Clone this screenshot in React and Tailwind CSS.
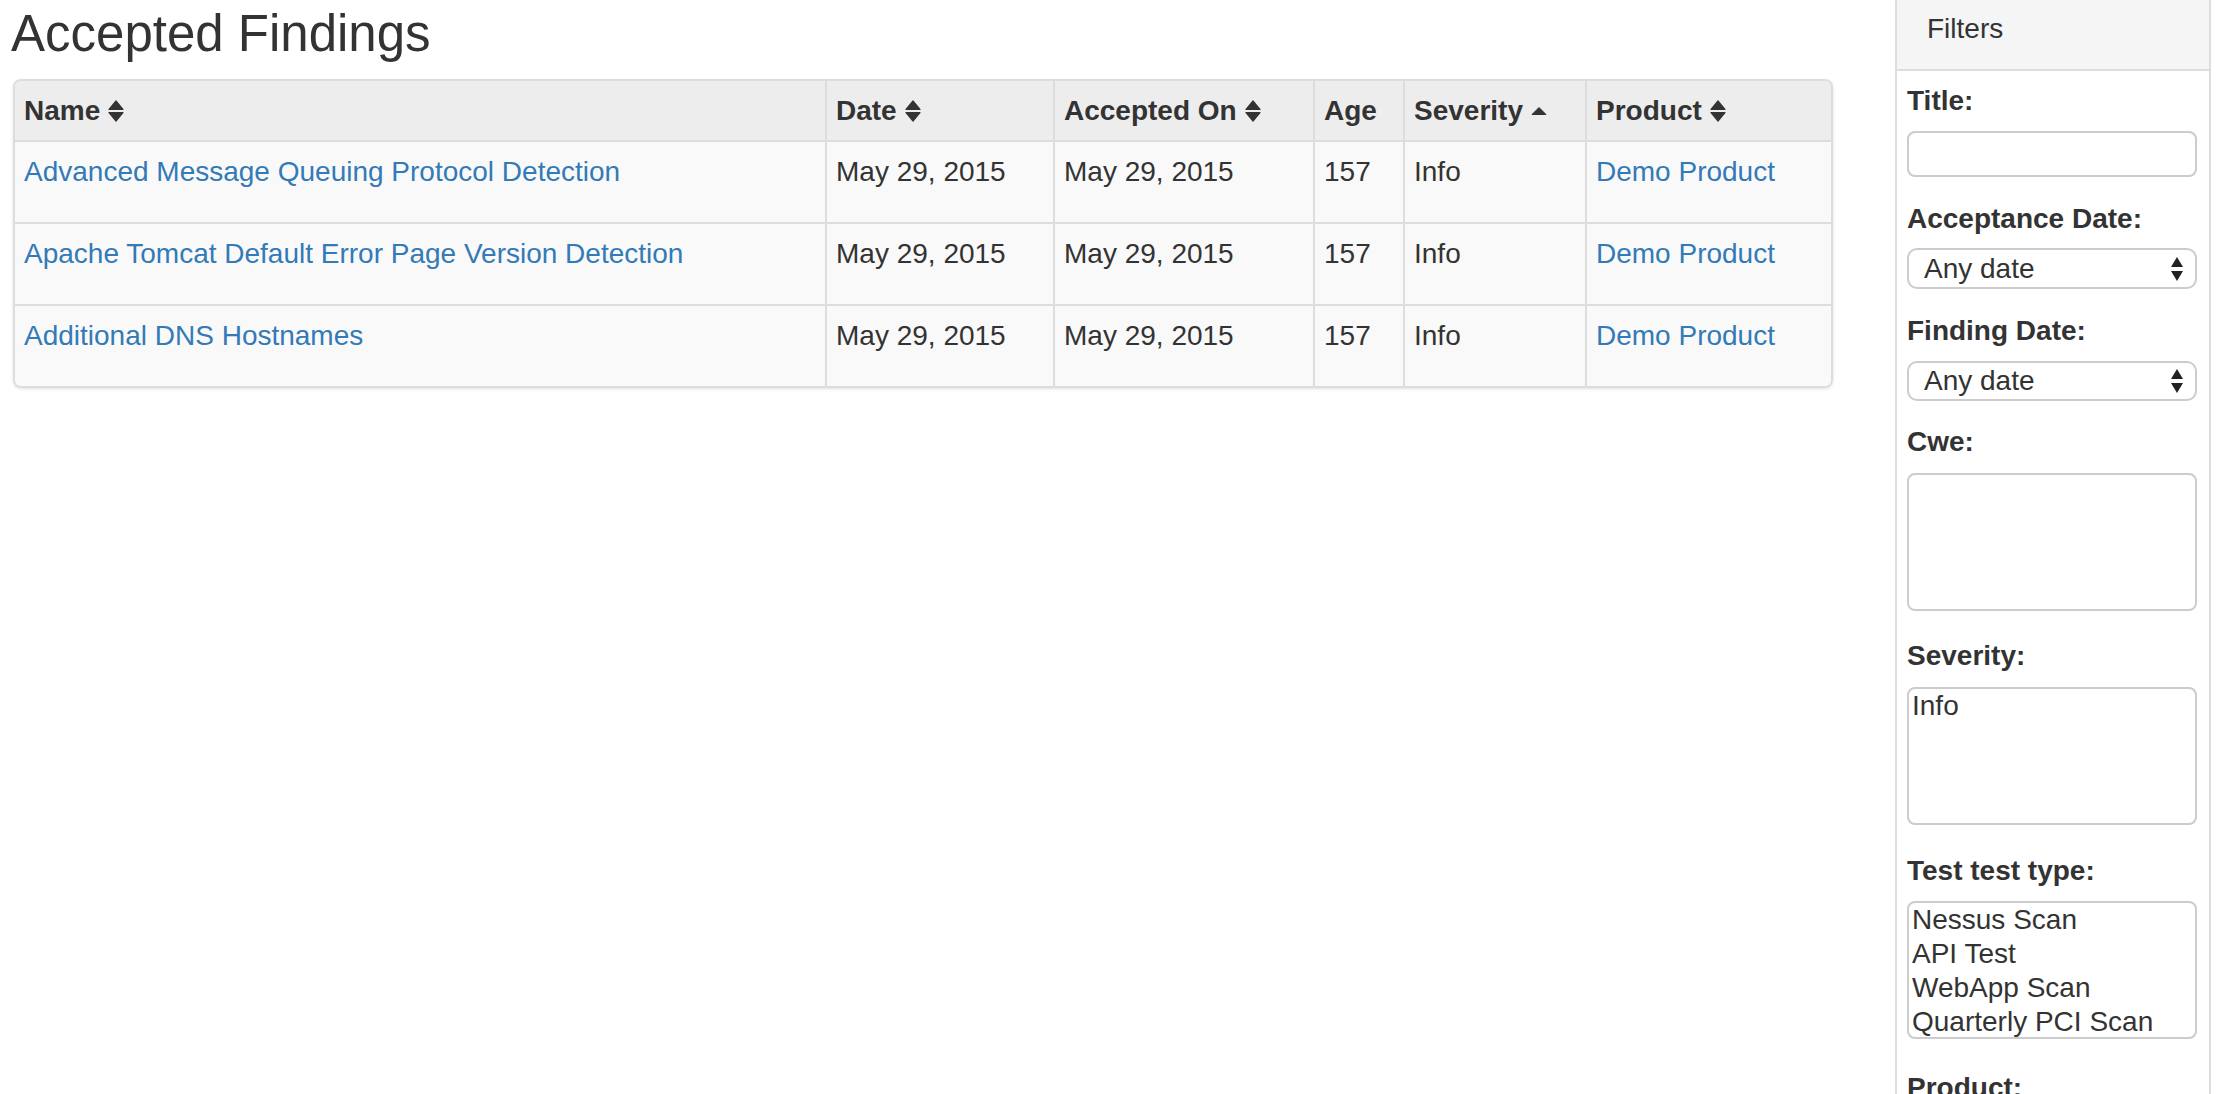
import React from 'react';

const rows = [
  'Advanced Message Queuing Protocol Detection',
  'Apache Tomcat Default Error Page Version Detection',
  'Additional DNS Hostnames',
];

const cols = 'grid grid-cols-[810px_228px_260px_90px_182px_246px]';

const SortIcon = () => (
  <svg width="16" height="22" viewBox="0 0 16 22" className="shrink-0">
    <path d="M1 9.5 L8 1 L15 9.5 Z" fill="#333" stroke="#333" strokeWidth="1.2" strokeLinejoin="round" />
    <path d="M1 12.5 L15 12.5 L8 21 Z" fill="#333" stroke="#333" strokeWidth="1.2" strokeLinejoin="round" />
  </svg>
);

const SortAsc = () => (
  <svg width="16" height="22" viewBox="0 0 16 22" className="shrink-0">
    <path d="M1 14.5 L8 7.5 L15 14.5 Z" fill="#333" stroke="#333" strokeWidth="1" strokeLinejoin="round" />
  </svg>
);

const SelectArrows = () => (
  <svg width="12" height="24" viewBox="0 0 12 24" className="shrink-0">
    <path d="M0 10 L6 0 L12 10 Z" fill="#222" />
    <path d="M0 14 L12 14 L6 24 Z" fill="#222" />
  </svg>
);

const Head = ({ label, icon, first }) => (
  <div className={`flex items-center pl-[9px] ${first ? '' : 'border-l-2 border-[#ddd]'}`}>
    <span className="inline-flex items-center gap-[8px] font-bold leading-[40px]">
      {label}
      {icon}
    </span>
  </div>
);

const Cell = ({ children, first, link }) => (
  <div className={`pl-[9px] pt-[10px] leading-[40px] ${first ? '' : 'border-l-2 border-[#ddd]'}`}>
    {link ? <a className="text-[#337ab7]">{children}</a> : children}
  </div>
);

const Label = ({ children, className }) => (
  <div className={`font-bold leading-[40px] ${className}`}>{children}</div>
);

const DateSelect = ({ className }) => (
  <div className={`flex items-center justify-between rounded-[10px] border-2 border-[#ccc] bg-white pl-[15px] pr-[12px] ${className}`}>
    <span className="leading-[32px]">Any date</span>
    <SelectArrows />
  </div>
);

const MultiBox = ({ items = [], className }) => (
  <div className={`h-[138px] overflow-hidden rounded-[8px] border-2 border-[#ccc] bg-white pl-[3px] leading-[34px] ${className}`}>
    {items.map((it) => (
      <div key={it}>{it}</div>
    ))}
  </div>
);

export default function App() {
  return (
    <div className="flex h-screen w-full overflow-hidden bg-white text-[28px] text-[#333] font-['Liberation_Sans',Arial,sans-serif]">
      <div className="w-[1895px] shrink-0 pl-[13px]">
        <h1 className="ml-[-2px] mt-[6px] text-[51px] font-normal leading-[55px]">Accepted Findings</h1>
        <div className="mt-[18px] w-[1820px] overflow-hidden rounded-[8px] border-2 border-[#ddd] shadow-[0_1px_3px_rgba(0,0,0,0.12)]">
          <div className={`${cols} h-[61px] border-b-2 border-[#ddd] bg-[#ededed]`}>
            <Head first label="Name" icon={<SortIcon />} />
            <Head label="Date" icon={<SortIcon />} />
            <Head label="Accepted On" icon={<SortIcon />} />
            <Head label="Age" />
            <Head label="Severity" icon={<SortAsc />} />
            <Head label="Product" icon={<SortIcon />} />
          </div>
          {rows.map((name, i) => (
            <div
              key={name}
              className={`${cols} bg-[#f9f9f9] ${i === 0 ? 'h-[80px]' : 'h-[82px] border-t-2 border-[#ddd]'}`}
            >
              <Cell first link>{name}</Cell>
              <Cell>May 29, 2015</Cell>
              <Cell>May 29, 2015</Cell>
              <Cell>157</Cell>
              <Cell>Info</Cell>
              <Cell link>Demo Product</Cell>
            </div>
          ))}
        </div>
      </div>

      <aside className="w-[316px] shrink-0 border-x-2 border-[#ddd]">
        <div className="h-[71px] border-b-2 border-[#ddd] bg-[#f5f5f5] pl-[30px] pt-[9px] leading-[40px]">Filters</div>
        <div className="pl-[10px] pr-[12px] pt-[10px]">
          <Label>Title:</Label>
          <div className="mt-[10px] h-[46px] rounded-[8px] border-2 border-[#ccc] bg-white" />

          <Label className="mt-[22px]">Acceptance Date:</Label>
          <DateSelect className="mt-[9px] h-[41px]" />

          <Label className="mt-[22px]">Finding Date:</Label>
          <DateSelect className="mt-[10px] h-[40px]" />

          <Label className="mt-[21px]">Cwe:</Label>
          <MultiBox className="mt-[11px]" />

          <Label className="mt-[25px]">Severity:</Label>
          <MultiBox className="mt-[11px]" items={['Info']} />

          <Label className="mt-[26px]">Test test type:</Label>
          <MultiBox
            className="mt-[10px]"
            items={['Nessus Scan', 'API Test', 'WebApp Scan', 'Quarterly PCI Scan']}
          />

          <Label className="mt-[29px]">Product:</Label>
        </div>
      </aside>
    </div>
  );
}
